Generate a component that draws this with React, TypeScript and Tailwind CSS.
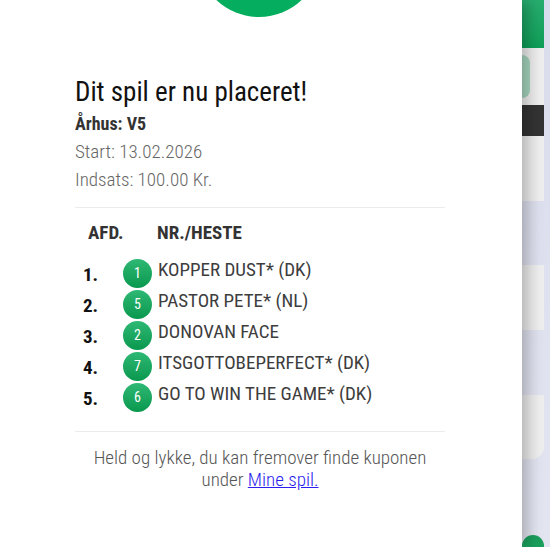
const rows = [
  { afd: "1.", nr: 1, name: "KOPPER DUST* (DK)" },
  { afd: "2.", nr: 5, name: "PASTOR PETE* (NL)" },
  { afd: "3.", nr: 2, name: "DONOVAN FACE" },
  { afd: "4.", nr: 7, name: "ITSGOTTOBEPERFECT* (DK)" },
  { afd: "5.", nr: 6, name: "GO TO WIN THE GAME* (DK)" },
];

const BehindPage = () => (
  <div className="flex-1 flex flex-col pr-[7px]">
    <div className="h-[48px] bg-gradient-to-b from-[#27ad6f] to-[#0e9f58]" />
    <div className="h-[57px] bg-[#eeeeee] py-[7px]">
      <div className="h-full w-[8px] rounded-r-[8px] bg-[#a7d6bf]" />
    </div>
    <div className="h-[31px] bg-[#333333]" />
    <div className="h-[65px] bg-[#eeeeee]" />
    <div className="h-[64px]" />
    <div className="h-[65px] bg-[#eeeeee]" />
    <div className="h-[65px]" />
    <div className="h-[64px] bg-[#eeeeee] rounded-br-[12px]" />
    <div className="flex-1 flex flex-col justify-end">
      <div className="h-[30px] w-[22px] rounded-t-full bg-[#1a9f5c] translate-y-[18px]" />
    </div>
  </div>
);

export default function App() {
  return (
    <div
      className="w-[550px] h-[547px] flex overflow-hidden bg-gradient-to-b from-[#d9dcec] to-[#e3e5f1]"
      style={{ fontFamily: "Roboto, 'Liberation Sans', sans-serif" }}
    >
      <div className="w-[522px] shrink-0 bg-white relative z-10 shadow-[6px_0_14px_rgba(0,0,0,0.25)] flex flex-col items-center">
        <div className="w-[124px] h-[124px] rounded-full bg-[#05ae5f] mt-[-107px] ml-[-4px]" />
        <div className="w-[370px] mr-[2px] mt-[59px] font-stretch-condensed">
          <h1 className="text-[27px] leading-[32px] text-[#111]">
            Dit spil er nu placeret!
          </h1>
          <p className="text-[18px] leading-[26px] font-bold text-[#333] mt-[3px]">
            Århus: V5
          </p>
          <p className="text-[19px] leading-[28px] font-light text-[#666] mt-[1px]">
            Start: 13.02.2026
          </p>
          <p className="text-[19px] leading-[28px] font-light text-[#666]">
            Indsats: 100.00 Kr.
          </p>
          <div className="h-px bg-[#ececec] mt-[13px]" />
          <div className="flex text-[19px] leading-[24px] font-bold text-[#333] mt-[13px]">
            <span className="w-[82px] pl-[13px]">AFD.</span>
            <span>NR./HESTE</span>
          </div>
          <div className="mt-[12px] flex flex-col gap-[2px]">
            {rows.map((r) => (
              <div key={r.afd} className="flex items-center h-[29px]">
                <span className="w-[48px] pl-[8px] text-[19px] font-bold text-[#111] mt-[8px]">
                  {r.afd}
                </span>
                <span className="w-[29px] h-[29px] rounded-full bg-gradient-to-b from-[#2db874] to-[#06984e] text-white text-[14px] flex items-center justify-center mt-[3px]">
                  {r.nr}
                </span>
                <span className="ml-[6px] text-[19px] text-[#3d3d3d] mt-[-2px]">
                  {r.name}
                </span>
              </div>
            ))}
          </div>
          <div className="h-px bg-[#ececec] mt-[21px]" />
          <p className="mt-[15px] text-center text-[19px] leading-[22px] font-light text-[#555]">
            Held og lykke, du kan fremover finde kuponen
            <br />
            under{" "}
            <a href="#" className="text-[#2a1ef0] underline">
              Mine spil.
            </a>
          </p>
        </div>
      </div>
      <BehindPage />
    </div>
  );
}
